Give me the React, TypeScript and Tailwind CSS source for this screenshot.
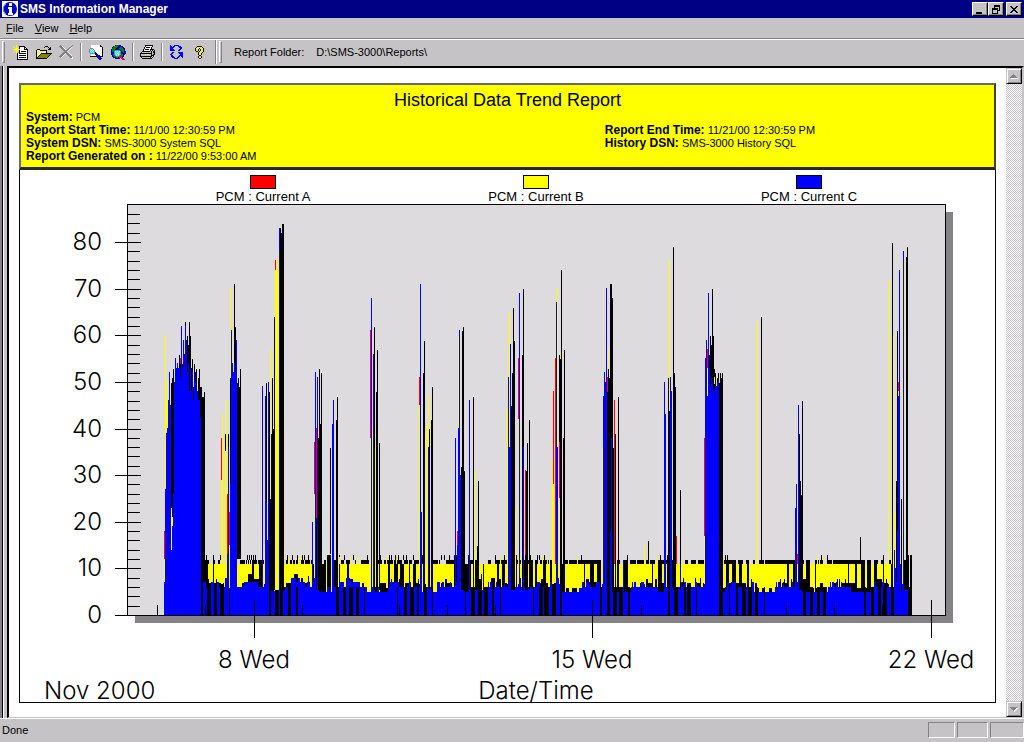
import { ReactNode } from 'react'

type Palette = Record<string, string>

const palette: Palette = {
  k: '#000000',
  w: '#ffffff',
  y: '#ffff00',
  o: '#848200',
  g: '#848284',
  b: '#0000ff',
  n: '#000084',
  c: '#00ffff',
  s: '#a5e7ef',
  e: '#008200',
  r: '#ff0000',
  m: '#e70052',
  l: '#c6c3c6',
}

const icons: Record<string, string[]> = {
  newReport: [
    '...y............',
    'y..y..kkkkkk....',
    '.y.y.ykwwwwkk...',
    '..yyy.kwwwwkwk..',
    'yyywyyywwwwkkkk.',
    '..yyy.kwwwwwwwk.',
    '.y.y.ykwkkkkkwk.',
    'y..y..kwwwwwwwk.',
    '...ykwkkkkkkkwk.',
    '....kwwwwwwwwwk.',
    '....kwkkkkkkkwk.',
    '....kwwwwwwwwwk.',
    '....kwkkkkkkkwk.',
    '....kwwwwwwwwwk.',
    '....kkkkkkkkkkk.',
  ],
  open: [
    '.........kkk....',
    '........k...k.k.',
    '.............kk.',
    '.kkk........kkk.',
    'kywykkkkkkk.....',
    'kwywywywywk.....',
    'kywywywywyk.....',
    'kwywykkkkkkkkkkk',
    'kywykoooooooook.',
    'kwykoooooooook..',
    'kykoooooooook...',
    'kkoooooooook....',
    'kkkkkkkkkkk.....',
  ],
  remove: [
    '.g...........g..',
    'gggw........g...',
    '.gggw.....ggw...',
    '..gggw...ggw....',
    '...gggw.ggw.....',
    '....gggggw......',
    '.....gggw.......',
    '....gggggw......',
    '...gggwgggw.....',
    '..gggw..gggw....',
    '.gggw....gggw...',
    'gggw......ggg...',
    '.gw........ggw..',
    '............ww..',
  ],
  find: [
    '..wwwwwwwwwk..',
    '..wwwwwwwwwkk.',
    '..wwwwwwwwwwwk',
    '.gggwwwwwwwwwk',
    'gscsgwwwwwwwwk',
    'gcscsgwwwwwwwk',
    'gscscgwwwwwwwk',
    'gcscsgnwwwwwwk',
    '.gggggbnwwwwwk',
    '..wwwwnbnwwwwk',
    '..wwwwwnbbnwwk',
    '.kkkkkkknbbnkk',
    '........nbbn..',
    '.........nnnn.',
    '..........nn..',
  ],
  globe: [
    '....neeenn......',
    '..neeeennbbn....',
    '.neeeennbeebn...',
    '.eeeennbeeeebn..',
    'neeennbbbeeeen..',
    'neeegggggbeeen..',
    'neegscscsgneebn.',
    'nbbgcscscgnnebn.',
    'nbbgscwscgbnnbn.',
    'nbegcscscgeenn..',
    '.neegscsgeeen...',
    '.nbeegggmmenn...',
    '..nnbeenmmmn....',
    '....nnnnn.mmm...',
    '...........mmm..',
  ],
  print: [
    '.....kkkkkkkk...',
    '.....kwwwwwwk...',
    '....kwkkkkwk....',
    '....kwwwwwwk....',
    '...kwkkkkwkkkk..',
    '...kwwwwwwklklk.',
    '..kkkkkkkklklkk.',
    '.klllllllllklkk.',
    'kkkkkkkkkkkkllk.',
    'kllllllyyllklkk.',
    'kllllllllllkkk..',
    'kkkkkkkkkkkklk..',
    '.kllllllllklk...',
    '..kkkkkkkkkk....',
  ],
  refresh: [
    'b...bbbbb....',
    'bb.bb...bbb..',
    'bbbb.....bbb.',
    'bbb.......bb.',
    'bbbb.....bb..',
    'bbbbb...bb...',
    '.............',
    '..bb....bbbbb',
    '.bb......bbbb',
    'bb........bbb',
    '.bb......bbbb',
    '.bbb....bb.bb',
    '..bbb..bb...b',
    '....bbbb.....',
  ],
  help: [
    '..kkkkk..',
    '.kyyyyyk.',
    'kyyykyyyk',
    'kyyk.kyyk',
    'kyyk.kyyk',
    '.kk.kyyyk',
    '...kyyyk.',
    '...kyyk..',
    '...kyyk..',
    '....kk...',
    '...kyyk..',
    '...kyyk..',
    '....kk...',
  ],
}

function PixelIcon({ name }: { name: string }) {
  const rows = icons[name]
  const width = rows[0].length
  return (
    <svg width={width} height={rows.length} viewBox={`0 0 ${width} ${rows.length}`} shapeRendering="crispEdges" aria-hidden="true">
      {rows.flatMap((row, y) =>
        row.split('').map((c, x) => (c === '.' ? null : <rect key={`${x}-${y}`} x={x} y={y} width={1} height={1} fill={palette[c]} />))
      )}
    </svg>
  )
}

// Each entry is "x colour+top ..."; a segment runs down to the next one, "e" ends the column
const spikes = `
163 r582|164 r531 y559 b582|165 y335 b489|166 y400 b433|167 y380 b428|168 b400|169 b372|170 b405|171 k383 y508 b550|172 k378 k508 y517 b526
173 k369 b494|174 b382|175 b358|176 b368|177 b363|178 b368|179 k355 b368|180 r358 k364 b377|181 b326|182 k364 b368|183 b340|184 y349 b354
185 k322 b326|186 b340|187 k336 b372|188 k345 b363|189 k322 b391|190 k336 b369|191 k368 b391|192 k359 b372|193 k387 b400|194 k364 b382
195 b372|196 k369 b391|197 b391|198 k378 b400|199 k369 b400|200 k387 b418|201 k387 e615|202 k397 e615|203 k397 b582|204 k392 b582
221 r438 y480|222 y414|225 k434 y451 b578|226 y400 b578|227 r494 b554|228 k434 b447|229 r512 y545 k588 e615
230 y288 k378 b484|231 b330|232 b363|233 b372|234 k284 b363|235 k327 b372|236 b340|237 k383 e559|238 k378 e559|239 k387 e559|240 k369 e559
262 b386|264 y545|265 b396|266 k383 b503|267 b540|268 b382|269 k392 e615|270 y349 k499 e615|271 k434|272 k378|273 k429|274 k317
275 r260 y270 k590|276 y270 k590|277 y260 k590|278 y251 k590|279 b228|280 k228 e615|281 k233 e615|282 k224 e615|283 k224
312 b522|314 r442 y494 b578|315 b372|316 r428 k518|317 b377|318 k438|319 k369|320 k424|321 k373|330 k448 e554|332 b424|333 b400|336 k420|337 k397
370 r330 y438|371 b298|372 y428|373 b354|374 k327|375 y447|376 k392|377 k350|379 k443
419 r377 y405|420 b284|421 b512|423 k373|424 k341|425 y433|427 y424|428 y396 b447|429 k429|431 k420|432 k387
455 b438|457 r531 b545|458 y335 b428|459 b330|460 b475|461 k467|462 k331|463 k327|464 k471|469 b400|473 k397|474 y470|477 k546|478 k481
507 y410|508 b377|509 y312 b447|510 b344|511 k406|512 k373|513 k308|514 k341|515 y508|518 r358 y419|519 b293|522 k355|523 k289 b447|525 r470 k555|526 k471|527 k443|529 k420
552 y461|553 r391 y484|555 r358|556 b302|557 y288 b447|559 k355 r442 y498|560 y354 k359|561 k270|563 k438|564 k350
602 y447|603 b396|604 b372|605 b382|606 b288|607 r377 k392|608 y349 k369|609 k378|610 k284 b531|611 k284 b438|612 k298|613 k448|614 r400|615 k434|618 k397|623 b560
644 y545|648 k541 e564|664 b382|665 b414|668 k378|669 y260 k411|670 b377|671 b391|673 k247|674 k373|675 k387|676 r536|680 k490
704 r438 y536|705 b358|706 b340|707 r349 y368 b396|708 b293|709 k355 b368|710 k336 b386|711 k345 b378|712 k289 b382|713 k336 b391|714 k369 y377 k384 b391
715 k373 b386|716 y378 b386|717 k378 b382|718 k373 b378|719 k383|720 k373|721 k378|722 k373
757 y321|761 k317 e564|795 b508|796 b484|797 r554 y564 b582|798 b405|799 k434|800 k481|801 k495|802 k401|860 k537 e564
888 y280|892 k243|893 y335|894 b550|895 y513 b568|896 k481 b582|897 k331 b530|898 r382 y391 b396|899 b270|900 b564|901 k499 y592|902 y260|903 b251|904 k560|905 k560|906 k257|907 k247|908 k555|910 k555 e615|911 k555 e615`

const defaultBottom: Record<string, number> = { k: 590, y: 584, r: 564, b: 615 }

const spikeRects = spikes
  .trim()
  .split(/[|\n]/)
  .flatMap((entry) => {
    const [x, ...parts] = entry.trim().split(' ')
    return parts.map((part, i) => {
      const color = part[0]
      const top = Number(part.slice(1))
      const bottom = i + 1 < parts.length ? Number(parts[i + 1].slice(1)) : defaultBottom[color] ?? top
      return { x: Number(x), color, top, height: bottom - top }
    })
  })
  .filter((r) => r.color !== 'e' && r.height > 0)

const blueSteps: [number, number][] = [
  [203, 582], [206, 588], [211, 582], [214, 587], [217, 582], [219, 587], [225, 578], [229, 588], [230, 584], [237, 587], [244, 582],
  [258, 587], [264, 584], [270, 591], [285, 587], [291, 578], [296, 582], [298, 578], [300, 582], [305, 587], [307, 582], [310, 587],
  [312, 582], [319, 592], [327, 587], [331, 592], [334, 587], [339, 582], [344, 587], [346, 578], [350, 582], [360, 587], [367, 592],
  [371, 587], [374, 592], [377, 587], [379, 592], [388, 587], [389, 582], [399, 587], [409, 582], [411, 587], [422, 592], [427, 587],
  [429, 578], [430, 587], [433, 592], [437, 582], [440, 587], [442, 582], [444, 587], [450, 582], [451, 587], [455, 582], [464, 592],
  [470, 590], [488, 582], [489, 587], [490, 582], [492, 587], [496, 582], [497, 587], [504, 582], [505, 587], [508, 578], [513, 587],
  [518, 578], [521, 587], [533, 587], [537, 582], [540, 587], [550, 582], [552, 587], [557, 578], [560, 592], [579, 588], [582, 582],
  [584, 587], [586, 582], [590, 587], [596, 582], [600, 592], [602, 582], [610, 592], [631, 587], [632, 582], [633, 587], [634, 582],
  [636, 587], [641, 582], [645, 587], [658, 592], [664, 587], [680, 582], [682, 587], [684, 582], [686, 587], [695, 582], [697, 587],
  [704, 582], [719, 592], [725, 587], [727, 582], [729, 587], [731, 582], [736, 587], [743, 592], [745, 587], [749, 587], [752, 582],
  [754, 592], [775, 587], [776, 582], [777, 587], [778, 582], [780, 587], [783, 582], [784, 587], [788, 582], [789, 587], [792, 582],
  [793, 587], [799, 582], [802, 592], [826, 587], [827, 592], [828, 587], [830, 582], [831, 587], [832, 582], [834, 587], [836, 582],
  [837, 587], [841, 582], [842, 587], [851, 592], [874, 582], [876, 587], [882, 582], [884, 587], [888, 582], [889, 587], [894, 572],
  [897, 582], [901, 592], [902, 578], [904, 582], [908, 615],
]

const bluePath = blueSteps.map(([x, y], i) => `${i === 0 ? `M${x} 615V${y}` : `H${x}V${y}`}`).join('') + 'Z'

// [x, width, top] of the dark fills that sit behind the blue area
const dark: number[][] = [
  [205, 3, 564], [208, 1, 579], [209, 2, 583], [213, 1, 560], [214, 2, 583], [216, 1, 579], [218, 6, 583], [242, 2, 583], [248, 4, 574],
  [252, 2, 564], [254, 5, 579], [259, 4, 564], [270, 4, 578], [276, 2, 583], [283, 2, 587], [286, 6, 583], [294, 4, 574], [299, 1, 579],
  [301, 2, 578], [305, 4, 583], [308, 1, 576], [312, 2, 564], [318, 8, 564], [327, 4, 555], [334, 4, 560], [339, 1, 555], [341, 2, 583],
  [347, 2, 564], [349, 4, 579], [353, 6, 583], [362, 2, 583], [372, 7, 587], [380, 6, 583], [386, 2, 588], [388, 2, 564], [391, 1, 579],
  [394, 4, 564], [399, 1, 579], [400, 4, 564], [405, 4, 583], [409, 1, 564], [413, 3, 564], [416, 2, 583], [418, 2, 579], [423, 3, 564],
  [431, 2, 564], [441, 3, 583], [445, 2, 579], [447, 5, 583], [454, 3, 555], [461, 4, 564], [465, 6, 564], [471, 4, 588], [475, 4, 560],
  [479, 2, 579], [481, 1, 574], [483, 1, 564], [484, 4, 588], [491, 4, 578], [497, 2, 564], [499, 2, 579], [502, 3, 564], [505, 3, 583],
  [511, 4, 564], [516, 1, 555], [522, 6, 560], [529, 4, 560], [535, 2, 564], [539, 2, 583], [541, 2, 579], [543, 3, 560], [546, 2, 583],
  [550, 2, 560], [552, 4, 583], [559, 4, 564], [563, 2, 588], [566, 3, 588], [572, 5, 588], [580, 2, 588], [584, 1, 564], [586, 3, 579],
  [589, 1, 583], [590, 4, 560], [594, 3, 582], [597, 4, 564], [607, 7, 564], [614, 2, 588], [617, 1, 564], [618, 4, 588], [624, 4, 560],
  [628, 3, 588], [640, 4, 583], [646, 2, 579], [648, 4, 583], [652, 1, 564], [655, 2, 579], [658, 4, 560], [662, 2, 583], [667, 2, 555],
  [672, 3, 560], [675, 3, 588], [680, 1, 564], [681, 2, 582], [683, 1, 578], [687, 4, 583], [695, 1, 578], [697, 4, 583], [700, 1, 578],
  [703, 1, 583], [719, 4, 560], [723, 3, 588], [726, 3, 564], [729, 2, 583], [732, 4, 560], [736, 3, 583], [739, 3, 564], [742, 4, 583],
  [747, 2, 564], [751, 1, 579], [755, 2, 583], [757, 2, 588], [762, 3, 588], [769, 3, 588], [780, 1, 579], [782, 1, 583], [784, 1, 579],
  [785, 4, 583], [787, 2, 564], [791, 1, 579], [793, 3, 560], [799, 4, 560], [803, 3, 579], [806, 4, 564], [810, 4, 588], [815, 1, 564],
  [816, 4, 588], [820, 3, 583], [823, 4, 588], [833, 3, 583], [837, 1, 579], [839, 1, 579], [842, 4, 583], [845, 1, 579], [846, 9, 583],
  [848, 1, 564], [855, 2, 564], [857, 4, 588], [861, 4, 560], [865, 3, 588], [867, 4, 560], [871, 3, 588], [874, 3, 560], [877, 5, 579],
  [883, 1, 564], [884, 4, 583], [886, 1, 579], [891, 2, 564], [904, 2, 560],
]

// [x, width] of the dark runs that reach the axis
const stripes: number[][] = [
  [201, 2], [207, 4], [214, 3], [220, 4], [269, 2], [275, 4], [280, 3], [288, 3], [296, 2], [336, 3], [343, 3], [349, 4], [356, 3],
  [364, 1], [397, 1], [404, 3], [410, 4], [417, 2], [424, 3], [432, 1], [465, 1], [471, 4], [478, 4], [484, 4], [492, 2], [500, 1],
  [533, 1], [539, 4], [544, 5], [552, 4], [560, 2], [600, 2], [607, 3], [613, 4], [619, 4], [628, 2], [668, 2], [674, 4], [684, 2],
  [687, 4], [696, 1], [719, 4], [729, 1], [736, 2], [742, 4], [748, 4], [755, 3], [764, 1], [797, 1], [803, 3], [810, 3], [817, 3],
  [823, 3], [864, 2], [871, 3], [878, 3], [883, 4], [891, 3], [908, 4],
]

const caps: number[][] = [
  [205, 4], [213, 2], [218, 2], [240, 4], [244, 1], [246, 1], [248, 1], [250, 1], [252, 5], [258, 6], [286, 2], [290, 2], [293, 2],
  [296, 3], [300, 4], [305, 5], [311, 1], [319, 2], [324, 2], [327, 4], [341, 3], [346, 4], [355, 1], [361, 8], [370, 5], [376, 6],
  [384, 9], [394, 8], [404, 4], [409, 3], [414, 12], [431, 7], [439, 1], [446, 8], [458, 3], [468, 6], [488, 3], [495, 14], [514, 7],
  [522, 7], [530, 1], [535, 3], [540, 9], [563, 5], [569, 8], [578, 23], [617, 3], [624, 3], [630, 6], [637, 7], [646, 3], [650, 5],
  [658, 9], [685, 3], [691, 5], [698, 6], [724, 12], [738, 5], [746, 3], [753, 2], [759, 5], [765, 30], [802, 2], [806, 4], [815, 4],
  [820, 3], [827, 5], [833, 32], [867, 4], [874, 4], [881, 3], [889, 2], [904, 3],
]

const nubs = [
  206, 213, 220, 247, 249, 251, 253, 255, 287, 292, 297, 302, 304, 308, 314, 327, 344, 353, 367, 372, 380, 389, 391, 395, 398, 403, 406,
  413, 422, 424, 431, 441, 444, 449, 458, 468, 495, 504, 514, 530, 537, 539, 544, 581, 627, 660, 725, 727, 821, 827, 883,
]
const yellowNubs = [288, 298, 300, 339, 350, 359, 386, 396, 500, 521, 542, 547, 577, 656, 723, 817, 823]

const dayTicks = [157, 205, 302, 350, 399, 447, 495, 544, 641, 689, 737, 786, 834, 882]
const weeks = [
  { x: 254, label: '8 Wed' },
  { x: 592, label: '15 Wed' },
  { x: 931, label: '22 Wed' },
]
const series = [
  { x: 263, label: 'PCM : Current A', fill: '#ff0000' },
  { x: 536, label: 'PCM : Current B', fill: '#ffff00' },
  { x: 809, label: 'PCM : Current C', fill: '#0000ff' },
]
const yTicks = Array.from({ length: 44 }, (_, i) => ({ value: i * 2, y: Math.round(615 - (i * 2 * 373) / 80) }))

function TrendChart() {
  return (
    <svg viewBox="20 170 975 532" className="block h-auto w-full overflow-visible" role="img" aria-label="Historical data trend">
      <g shapeRendering="crispEdges">
        <rect x={135} y={212} width={818} height={411} fill="#848284" />
        <rect x={127} y={204} width={819} height={412} fill="#000" />
        <rect x={128} y={205} width={817} height={410} fill="#dedbde" />

        {yTicks.map(({ value, y }) =>
          value % 10 === 0 ? (
            <rect key={value} x={115} y={y} width={26} height={1} />
          ) : (
            <rect key={value} x={128} y={y} width={12} height={1} />
          )
        )}

        <rect x={205} y={564} width={703} height={28} fill="#ffff00" />
        {dark.map(([x, w, top]) => (
          <rect key={`${x}-${top}`} x={x} y={top} width={w} height={593 - top} />
        ))}
        {caps.map(([x, w]) => (
          <rect key={x} x={x} y={560} width={w} height={4} />
        ))}
        {nubs.map((x) => (
          <rect key={x} x={x} y={555} width={1} height={5} />
        ))}
        {yellowNubs.map((x) => (
          <rect key={x} x={x} y={557} width={1} height={7} fill="#ffff00" />
        ))}
        <path d={bluePath} fill="#0000ff" />
        {stripes.map(([x, w]) => (
          <rect key={x} x={x} y={587} width={w} height={28} />
        ))}
        {spikeRects.map((r) => (
          <rect key={`${r.x}-${r.top}`} x={r.x} y={r.top} width={1} height={r.height} fill={palette[r.color]} />
        ))}

        {dayTicks.map((x) => (
          <rect key={x} x={x} y={605} width={1} height={10} />
        ))}
        {weeks.map(({ x }) => (
          <rect key={x} x={x} y={600} width={1} height={38} />
        ))}
        {series.map(({ x, fill }) => (
          <g key={x}>
            <rect x={x - 13} y={175} width={26} height={14} />
            <rect x={x - 12} y={176} width={24} height={12} fill={fill} />
          </g>
        ))}
      </g>

      <g className="font-['Liberation_Sans',Arial,sans-serif] text-[13px]" textAnchor="middle">
        {series.map(({ x, label }) => (
          <text key={label} x={x} y={201}>{label}</text>
        ))}
      </g>
      <g className="font-[Inter,sans-serif] text-[24px] font-light">
        {yTicks.filter((t) => t.value % 10 === 0).map(({ value, y }) => (
          <text key={value} x={102} y={y + 8} textAnchor="end">{value}</text>
        ))}
        {weeks.map(({ x, label }) => (
          <text key={label} x={x} y={668} textAnchor="middle">{label}</text>
        ))}
        <text x={44} y={699}>Nov 2000</text>
        <text x={536} y={699} textAnchor="middle">Date/Time</text>
      </g>
    </svg>
  )
}

function CaptionButton({ label, children }: { label: string; children: ReactNode }) {
  return (
    <button
      aria-label={label}
      className="flex h-[14px] w-4 items-center justify-center border border-t-white border-r-black border-b-black border-l-white bg-[#c6c3c6] shadow-[inset_-1px_-1px_#848284]"
    >
      <svg width="10" height="9" viewBox="0 0 10 9" shapeRendering="crispEdges">{children}</svg>
    </button>
  )
}

function ToolButton({ label, icon }: { label: string; icon: string }) {
  return (
    <button aria-label={label} title={label} className="flex h-6 w-[23px] items-center justify-center">
      <PixelIcon name={icon} />
    </button>
  )
}

function Separator() {
  return <div className="mx-[2px] h-[18px] w-[2px] border-l border-l-[#848284] bg-white" />
}

function Grip() {
  return <div className="h-[22px] w-[3px] border border-t-white border-r-[#848284] border-b-[#848284] border-l-white" />
}

function ScrollButton({ label, down }: { label: string; down?: boolean }) {
  const arrow = down ? 'M0 0h7v1h-1v1h-1v1h-1v1h-1v-1h-1v-1h-1v-1h-1z' : 'M3 0h1v1h1v1h1v1h1v1h-7v-1h1v-1h1v-1h1z'
  return (
    <button
      aria-label={label}
      className="flex h-4 w-4 items-center justify-center border border-t-[#c6c3c6] border-r-black border-b-black border-l-[#c6c3c6] bg-[#c6c3c6] shadow-[inset_1px_1px_#fff,inset_-1px_-1px_#848284]"
    >
      <svg width="8" height="5" viewBox="0 0 8 5" shapeRendering="crispEdges">
        <path d={arrow} fill="#fff" transform="translate(1 1)" />
        <path d={arrow} fill="#848284" />
      </svg>
    </button>
  )
}

function Field({ name, value }: { name: string; value: string }) {
  return (
    <div className="text-[11px] leading-[13px]">
      <b className="text-[12px] leading-[13px]">{name}</b> {value}
    </div>
  )
}

export default function App() {
  return (
    <div className="flex min-h-screen flex-col bg-[#c6c3c6] font-['Liberation_Sans',Arial,sans-serif] text-[11px] text-black">
      {/* Title bar */}
      <header className="flex h-[18px] items-center bg-[#000084] px-[2px] text-white">
        <svg width="16" height="16" viewBox="0 0 16 16" className="mr-[2px]" aria-hidden="true">
          <rect width="16" height="16" fill="#fff" />
          <circle cx="8" cy="8" r="7" fill="#0000c6" />
          <path d="M4 3a6 6 0 0 0 0 10" fill="none" stroke="#5a9aff" />
          <path d="M7 2h3v3H7zM6 6h4v6h1v2H6v-2h1V8H6z" fill="#fff" />
        </svg>
        <h1 className="flex-1 text-[12px] font-bold">SMS Information Manager</h1>
        <div className="flex">
          <CaptionButton label="Minimize"><path d="M1 7h6v2H1z" /></CaptionButton>
          <CaptionButton label="Restore">
            <path d="M3 0h6v6H7V5h1V2H4v1H3zM1 3h6v6H1zM2 5v3h4V5z" fillRule="evenodd" />
          </CaptionButton>
          <div className="w-[2px]" />
          <CaptionButton label="Close">
            <path d="M1 1h2v1h1v1h2V2h1V1h2v1H8v1H7v1H6v1h1v1h1v1h1v1H7V7H6V6H4v1H3v1H1V7h1V6h1V5h1V4H3V3H2V2H1z" />
          </CaptionButton>
        </div>
      </header>

      {/* Menu bar */}
      <nav className="flex h-[21px] items-center gap-[11px] border-b border-b-[#848284] px-[6px]">
        <button><u>F</u>ile</button>
        <button><u>V</u>iew</button>
        <button><u>H</u>elp</button>
      </nav>

      {/* Toolbar */}
      <div className="flex h-[27px] items-center border-t border-t-white pb-[2px] pl-[2px]">
        <Grip />
        <div className="ml-1 flex items-center">
          <ToolButton label="New report" icon="newReport" />
          <ToolButton label="Open" icon="open" />
          <ToolButton label="Delete" icon="remove" />
          <Separator />
          <ToolButton label="Find" icon="find" />
          <ToolButton label="Search the web" icon="globe" />
          <Separator />
          <ToolButton label="Print" icon="print" />
          <Separator />
          <ToolButton label="Refresh" icon="refresh" />
          <ToolButton label="Help" icon="help" />
        </div>
        <div className="mr-[2px] ml-1 h-6 w-[2px] border-l border-l-[#848284] bg-white" />
        <Grip />
        <span className="ml-3">Report Folder:</span>
        <span className="ml-3">D:\SMS-3000\Reports\</span>
      </div>

      {/* Report view */}
      <div className="flex flex-1">
        <div className="w-[3px] border-r border-r-black bg-[#848284]" />
        <div className="w-1 border-l border-l-white" />
        <div className="flex flex-1 border-t-2 border-r-2 border-b border-l-2 border-t-black border-r-[#c6c3c6] border-b-[#c6c3c6] border-l-black bg-white">
          <main className="flex-1 px-[10px] pt-[15px] pb-[14px]">
            <section className="border border-t-0 border-black">
              <div className="-mx-px border-t-2 border-r-2 border-b-[3px] border-l-2 border-t-[#6b696b] border-r-[#424142] border-b-[#292829] border-l-[#6b696b] bg-[#ffff00] pt-1 pb-1">
                <h2 className="text-center text-[18px] leading-[22px]">Historical Data Trend Report</h2>
                <div className="grid grid-cols-[3fr_2fr]">
                  <div className="pl-[5px]">
                    <Field name="System:" value="PCM" />
                    <Field name="Report Start Time:" value="11/1/00 12:30:59 PM" />
                    <Field name="System DSN:" value="SMS-3000 System SQL" />
                    <Field name="Report Generated on :" value="11/22/00 9:53:00 AM" />
                  </div>
                  <div className="pt-[13px]">
                    <Field name="Report End Time:" value="11/21/00 12:30:59 PM" />
                    <Field name="History DSN:" value="SMS-3000 History SQL" />
                  </div>
                </div>
              </div>
              <TrendChart />
            </section>
          </main>
          <div className="flex w-4 flex-col bg-[repeating-conic-gradient(#fff_0_25%,#c6c3c6_0_50%)] bg-[size:2px_2px]">
            <ScrollButton label="Scroll up" />
            <div className="flex-1" />
            <ScrollButton label="Scroll down" down />
          </div>
        </div>
      </div>

      {/* Status bar */}
      <footer className="flex h-6 items-start border-t border-t-white pt-[3px] pl-[2px]">
        <span className="flex-1 leading-4">Done</span>
        <div className="flex gap-[2px]">
          <div className="h-4 w-[27px] border border-t-[#848284] border-r-white border-b-white border-l-[#848284]" />
          <div className="h-4 w-[31px] border border-t-[#848284] border-r-white border-b-white border-l-[#848284]" />
          <div className="h-4 w-[34px] border border-t-[#848284] border-r-white border-b-white border-l-[#848284]" />
        </div>
      </footer>
    </div>
  )
}
